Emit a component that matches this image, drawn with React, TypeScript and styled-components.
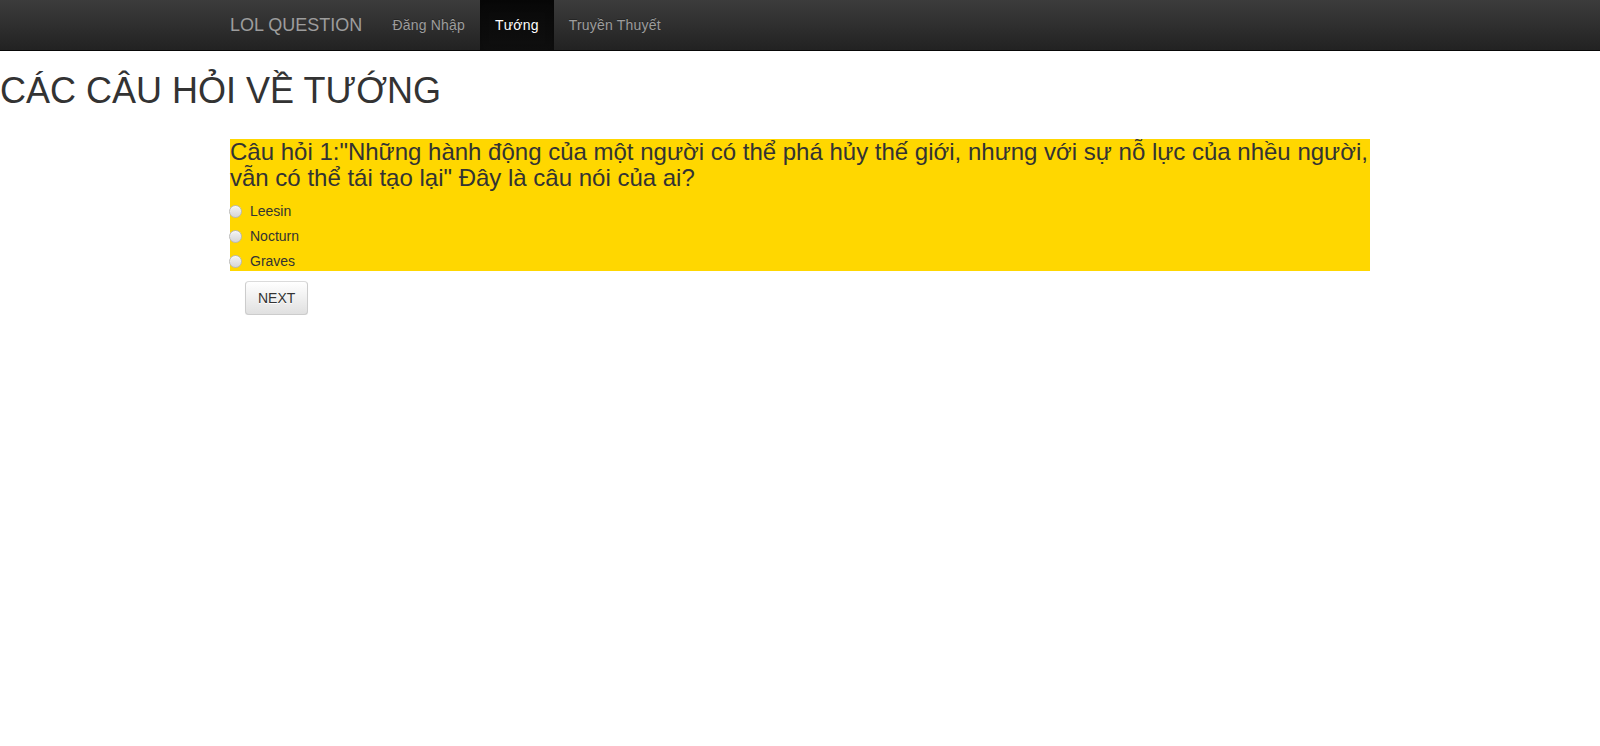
import React from "react";
import styled, { createGlobalStyle } from "styled-components";

const Global = createGlobalStyle`
  html, body { margin: 0; padding: 0; }
  body {
    font-family: "Liberation Sans", Arial, Helvetica, sans-serif;
    font-size: 14px;
    line-height: 1.42857143;
    color: #333;
    background: #fff;
  }
  * { box-sizing: border-box; }
`;

const Navbar = styled.nav`
  height: 51px;
  margin-bottom: 20px;
  background-image: linear-gradient(to bottom, #3c3c3c 0, #222 100%);
  border-bottom: 1px solid #080808;
`;

const NavContainer = styled.div`
  width: 1170px;
  margin: 0 auto;
  padding: 0 15px;
  display: flex;
  align-items: stretch;
  height: 50px;
`;

const Brand = styled.a`
  display: block;
  margin-left: -15px;
  padding: 15px;
  height: 50px;
  font-size: 18px;
  line-height: 20px;
  color: #9d9d9d;
  text-decoration: none;
`;

const NavList = styled.ul`
  display: flex;
  list-style: none;
  margin: 0;
  padding: 0;
`;

const NavLink = styled.a<{ $active?: boolean }>`
  display: block;
  padding: 15px;
  height: 50px;
  line-height: 20px;
  font-size: 14px;
  letter-spacing: 0.2px;
  text-decoration: none;
  color: ${(p) => (p.$active ? "#fff" : "#9d9d9d")};
  background-image: ${(p) =>
    p.$active ? "linear-gradient(to bottom, #080808 0, #0f0f0f 100%)" : "none"};
  box-shadow: ${(p) => (p.$active ? "inset 0 3px 9px rgba(0,0,0,.25)" : "none")};
  text-shadow: 0 -1px 0 rgba(0, 0, 0, 0.25);
`;

const Title = styled.h1`
  margin: 17px 0 28px;
  font-size: 36px;
  font-weight: 500;
  line-height: 1.1;
  color: #333;
`;

const Container = styled.div`
  width: 1170px;
  margin: 0 auto;
  padding: 0 15px;
`;

const QuestionBox = styled.div`
  background: #ffd700;
`;

const Question = styled.h3`
  margin: 0;
  font-size: 24px;
  font-weight: 500;
  line-height: 1.1;
  color: #333;
`;

const RadioRow = styled.div`
  margin: 10px 0;
  & + & {
    margin-top: -5px;
  }
`;

const RadioLabel = styled.label`
  display: flex;
  align-items: center;
  min-height: 20px;
  font-weight: 400;
  cursor: pointer;
`;

const Radio = styled.input`
  appearance: none;
  -webkit-appearance: none;
  width: 13px;
  height: 13px;
  margin: 0 8px 0 -1px;
  border-radius: 50%;
  border: 1px solid #b9b9b9;
  background: linear-gradient(to bottom, #f3f3f3 0, #d6d6d6 100%);
  box-shadow: inset 0 1px 1px rgba(255, 255, 255, 0.6);
`;

const Actions = styled.div`
  padding: 0 15px;
  margin-top: 10px;
`;

const Button = styled.button`
  display: inline-block;
  padding: 6px 12px;
  font-family: inherit;
  font-size: 14px;
  line-height: 1.42857143;
  color: #333;
  border: 1px solid #ccc;
  border-color: #dbdbdb #ccc #ccc;
  border-radius: 4px;
  background-image: linear-gradient(to bottom, #fff 0, #e0e0e0 100%);
  text-shadow: 0 1px 0 #fff;
  box-shadow: inset 0 1px 0 rgba(255, 255, 255, 0.15), 0 1px 1px rgba(0, 0, 0, 0.075);
  cursor: pointer;
`;

const options = ["Leesin", "Nocturn", "Graves"];

export default function App() {
  return (
    <>
      <Global />
      <Navbar>
        <NavContainer>
          <Brand href="#">LOL QUESTION</Brand>
          <NavList>
            <li>
              <NavLink href="#">Đăng Nhập</NavLink>
            </li>
            <li>
              <NavLink href="#" $active>
                Tướng
              </NavLink>
            </li>
            <li>
              <NavLink href="#">Truyền Thuyết</NavLink>
            </li>
          </NavList>
        </NavContainer>
      </Navbar>
      <Title>CÁC CÂU HỎI VỀ TƯỚNG</Title>
      <Container>
        <QuestionBox>
          <Question>
            Câu hỏi 1:"Những hành động của một người có thể phá hủy thế giới, nhưng với sự nỗ lực
            của nhều người, vẫn có thể tái tạo lại" Đây là câu nói của ai?
          </Question>
          {options.map((o) => (
            <RadioRow key={o}>
              <RadioLabel>
                <Radio type="radio" name="q1" value={o} />
                {o}
              </RadioLabel>
            </RadioRow>
          ))}
        </QuestionBox>
        <Actions>
          <Button type="button">NEXT</Button>
        </Actions>
      </Container>
    </>
  );
}
